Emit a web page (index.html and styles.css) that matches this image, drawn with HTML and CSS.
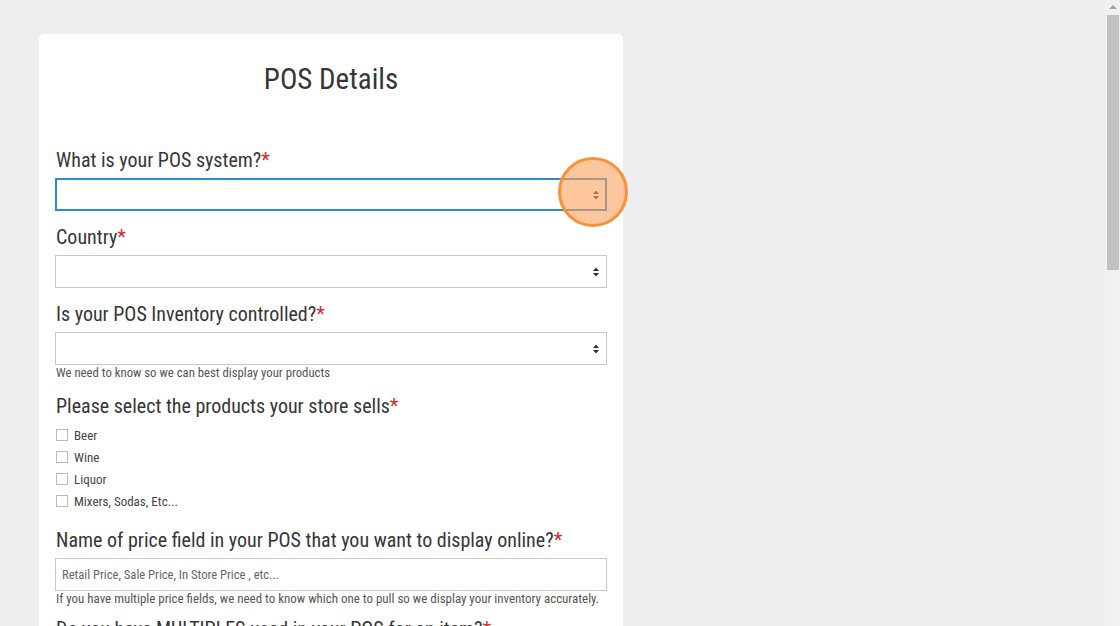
FILE: index.html
```html
<!DOCTYPE html>
<html lang="en">
<head>
  <meta charset="UTF-8">
  <title>POS Details</title>
  <link rel="stylesheet" href="styles.css">
</head>
<body>

<div class="cartao">
  <h1 class="titulo">POS Details</h1>

  <div class="campo">
    <label class="rotulo">What is your POS system?<span class="obrigatorio">*</span></label>
    <div class="destaque-wrap">
      <select class="seletor seletor-foco"><option></option></select>
      <div class="destaque"></div>
    </div>
  </div>

  <div class="campo">
    <label class="rotulo">Country<span class="obrigatorio">*</span></label>
    <select class="seletor"><option></option></select>
  </div>

  <div class="campo">
    <label class="rotulo">Is your POS Inventory controlled?<span class="obrigatorio">*</span></label>
    <select class="seletor"><option></option></select>
    <div class="ajuda">We need to know so we can best display your products</div>
  </div>

  <div class="campo campo-lista">
    <label class="rotulo">Please select the products your store sells<span class="obrigatorio">*</span></label>
    <div class="opcoes">
      <label class="opcao"><span class="caixa"></span>Beer</label>
      <label class="opcao"><span class="caixa"></span>Wine</label>
      <label class="opcao"><span class="caixa"></span>Liquor</label>
      <label class="opcao"><span class="caixa"></span>Mixers, Sodas, Etc...</label>
    </div>
  </div>

  <div class="campo campo-curto">
    <label class="rotulo">Name of price field in your POS that you want to display online?<span class="obrigatorio">*</span></label>
    <input class="texto" type="text" placeholder="Retail Price, Sale Price, In Store Price , etc...">
    <div class="ajuda ajuda-longa">If you have multiple price fields, we need to know which one to pull so we display your inventory accurately.</div>
  </div>

  <div class="campo">
    <label class="rotulo">Do you have MULTIPLES used in your POS for an item?<span class="obrigatorio">*</span></label>
    <select class="seletor"><option></option></select>
  </div>
</div>

<div class="barra-rolagem">
  <div class="seta-rolagem"></div>
  <div class="polegar"></div>
</div>

</body>
</html>
```

FILE: styles.css
```css
html, body {
  height: 100%;
  overflow: hidden;
}
body {
  margin: 0;
  background: #eceef0;
  font-family: "Roboto Condensed", "Liberation Sans", Arial, sans-serif;
  color: #333;
}
.cartao {
  width: 552px;
  margin: 34px 0 0 39px;
  padding: 24px 16px 40px;
  background: white;
  border-radius: 5px;
}
.titulo {
  margin: 0 0 48px;
  font-size: 29px;
  font-weight: normal;
  text-align: center;
  line-height: 42px;
  color: #363636;
}
.campo {
  margin-bottom: 14px;
}
.campo-lista {
  margin-bottom: 16px;
}
.campo-curto {
  margin-bottom: 11px;
}
.rotulo {
  display: block;
  font-size: 20px;
  line-height: 24px;
  margin: 0 0 6px 1px;
  color: #363636;
}
.obrigatorio {
  color: #c9302c;
}
.seletor {
  display: block;
  width: 552px;
  height: 33px;
  margin: 0;
  border: 1px solid #c8c8c8;
  background: white url("data:image/svg+xml;utf8,<svg xmlns='http://www.w3.org/2000/svg' width='8' height='12'><path d='M4 1.5 L7 5 L1 5 Z M4 10.5 L7 7 L1 7 Z' fill='%23333'/></svg>") no-repeat right 6px center;
  -webkit-appearance: none;
  appearance: none;
  border-radius: 0;
}
.seletor-foco {
  border: 2px solid #2b8dd0;
  background-position: right 5px center;
}
.destaque-wrap {
  position: relative;
}
.destaque {
  position: absolute;
  left: 503px;
  top: -21px;
  width: 64px;
  height: 64px;
  border: 3px solid #f7923a;
  border-radius: 50%;
  background: rgba(252, 160, 90, 0.6);
}
.ajuda {
  font-size: 12.75px;
  line-height: 14px;
  margin: 1px 0 0 1px;
  color: #555;
  white-space: nowrap;
}
.ajuda-longa {
  font-size: 12.95px;
}
.opcoes {
  display: flex;
  flex-direction: column;
}
.opcao {
  display: flex;
  align-items: center;
  height: 22px;
  font-size: 13px;
  color: #444;
}
.caixa {
  width: 10px;
  height: 10px;
  border: 1px solid #bbb;
  margin: 0 6px 0 1px;
}
.texto {
  display: block;
  width: 552px;
  height: 33px;
  box-sizing: border-box;
  margin: 0;
  padding: 0 6px;
  border: 1px solid #c8c8c8;
  font-family: inherit;
  font-size: 12.6px;
}
.texto::placeholder {
  color: #666;
}
.barra-rolagem {
  position: fixed;
  top: 0;
  right: 0;
  width: 15px;
  height: 100%;
  background: #f1f1f1;
}
.seta-rolagem {
  width: 0;
  height: 0;
  margin: 5px auto 0;
  border-left: 4px solid transparent;
  border-right: 4px solid transparent;
  border-bottom: 4px solid #a3a3a3;
}
.polegar {
  margin: 6px 1px 0 2px;
  height: 255px;
  background: #c1c1c1;
}
```
